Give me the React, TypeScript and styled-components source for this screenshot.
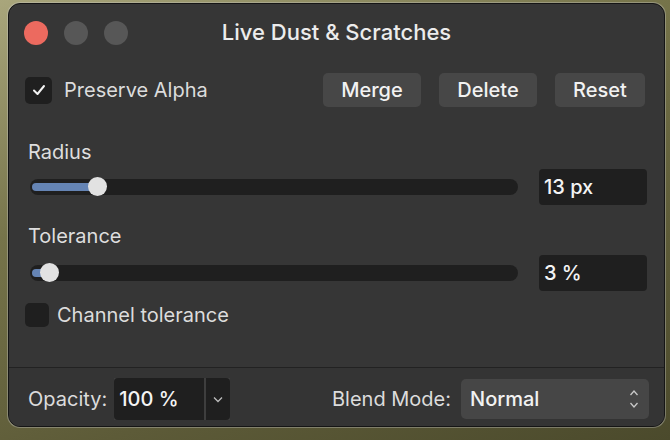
import { createGlobalStyle } from 'styled-components'
import styled from 'styled-components'

const GlobalStyle = createGlobalStyle`
  body {
    margin: 0;
    background: linear-gradient(160deg, #a9a67c 0%, #76744a 35%, #5d5b38 70%, #4b4a2c 100%);
    font-family: Inter, "Open Sans", "Liberation Sans", sans-serif;
    -webkit-font-smoothing: antialiased;
  }
`

const Page = styled.div`
  width: 670px;
  height: 440px;
  padding: 3px 0 0 8px;
  box-sizing: border-box;
`

const Window = styled.div`
  width: 657px;
  height: 424px;
  box-sizing: border-box;
  border-radius: 12px;
  background: #363636;
  border: 1px solid #151515;
  box-shadow: 0 0 0 1px rgba(210, 210, 210, 0.35);
  display: flex;
  flex-direction: column;
  overflow: hidden;
  color: #e2e2e2;
`

const TitleBar = styled.div`
  height: 57px;
  display: grid;
  grid-template-columns: 1fr auto 1fr;
  align-items: center;
  padding: 0 15px;
  flex-shrink: 0;
`

const Lights = styled.div`
  display: flex;
  gap: 16px;
`

const Light = styled.span<{ $color: string }>`
  width: 24px;
  height: 24px;
  border-radius: 50%;
  background: ${(p) => p.$color};
`

const Title = styled.div`
  font-size: 22px;
  font-weight: 500;
  color: #ececec;
  margin-top: -2px;
`

const Content = styled.div`
  flex: 1;
  display: flex;
  flex-direction: column;
  padding: 12px 17px 0 16px;
`

const TopRow = styled.div`
  display: flex;
  align-items: center;
  height: 34px;
`

const CheckRow = styled.label<{ $gap: number; $top?: number }>`
  display: flex;
  align-items: center;
  gap: ${(p) => p.$gap}px;
  margin-top: ${(p) => p.$top ?? 0}px;
  font-size: 20px;
  color: #dcdcdc;
`

const Box = styled.span<{ $size: number }>`
  width: ${(p) => p.$size}px;
  height: ${(p) => p.$size}px;
  border-radius: 5px;
  background: #1f1f1f;
  display: flex;
  align-items: center;
  justify-content: center;
`

const Buttons = styled.div`
  margin-left: auto;
  margin-right: 2px;
  display: flex;
  gap: 18px;
`

const Button = styled.button<{ $w: number }>`
  width: ${(p) => p.$w}px;
  height: 34px;
  border: 0;
  border-radius: 5px;
  background: #474747;
  color: #f2f2f2;
  font-family: inherit;
  font-size: 20px;
  font-weight: 500;
  padding: 0;
`

const Label = styled.div<{ $top: number }>`
  margin: ${(p) => p.$top}px 0 0 3px;
  font-size: 20px;
  line-height: 24px;
  color: #dedede;
`

const SliderRow = styled.div<{ $top: number }>`
  display: flex;
  align-items: center;
  height: 36px;
  margin-top: ${(p) => p.$top}px;
`

const Track = styled.div`
  position: relative;
  margin-left: 5px;
  width: 488px;
  height: 16px;
  border-radius: 8px;
  background: #1f1f1f;
`

const Fill = styled.div`
  position: absolute;
  left: 2px;
  top: 4px;
  height: 8px;
  border-radius: 4px;
  background: #6584b4;
`

const Thumb = styled.div`
  position: absolute;
  top: -2px;
  width: 19px;
  height: 19px;
  margin-left: -10px;
  border-radius: 50%;
  background: #e2e2e2;
`

const ValueBox = styled.div`
  margin-left: 21px;
  width: 108px;
  height: 36px;
  box-sizing: border-box;
  border-radius: 4px;
  background: #1f1f1f;
  color: #f4f4f4;
  font-size: 20px;
  font-weight: 500;
  display: flex;
  align-items: center;
  padding-left: 5px;
`

const Footer = styled.div`
  height: 59px;
  box-sizing: border-box;
  flex-shrink: 0;
  border-top: 1px solid #222;
  background: #343434;
  display: flex;
  align-items: center;
  padding: 4px 15px 0 19px;
  font-size: 20px;
  color: #dcdcdc;
`

const Combo = styled.div`
  margin-left: 7px;
  display: flex;
  gap: 2px;
  height: 42px;
  background: #3e3e3e;
`

const ComboField = styled.div`
  width: 90px;
  background: #1f1f1f;
  border-radius: 4px 0 0 4px;
  color: #f4f4f4;
  font-weight: 500;
  display: flex;
  align-items: center;
  padding-left: 5px;
  box-sizing: border-box;
`

const ComboArrow = styled.div`
  width: 24px;
  background: #1f1f1f;
  border-radius: 0 4px 4px 0;
  display: flex;
  align-items: center;
  justify-content: center;
`

const BlendLabel = styled.span`
  margin-left: auto;
`

const Select = styled.div`
  margin-left: 10px;
  width: 188px;
  height: 40px;
  box-sizing: border-box;
  border-radius: 5px;
  background: #464646;
  color: #f2f2f2;
  font-weight: 500;
  display: flex;
  align-items: center;
  padding: 0 10px 0 9px;
  justify-content: space-between;
`

function Check() {
  return (
    <svg width="14" height="12" viewBox="0 0 14 12">
      <path d="M2 6.5 L5.5 10 L12 2" fill="none" stroke="#f2f2f2" strokeWidth="2" strokeLinecap="round" strokeLinejoin="round" />
    </svg>
  )
}

function Slider({ value }: { value: number }) {
  return (
    <Track>
      <Fill style={{ width: `${value}%` }} />
      <Thumb style={{ left: `${value}%` }} />
    </Track>
  )
}

export default function App() {
  return (
    <>
      <GlobalStyle />
      <Page>
        <Window>
          <TitleBar>
            <Lights>
              <Light $color="#ec6a5f" />
              <Light $color="#575757" />
              <Light $color="#575757" />
            </Lights>
            <Title>Live Dust &amp; Scratches</Title>
            <span />
          </TitleBar>
          <Content>
            <TopRow>
              <CheckRow $gap={12}>
                <Box $size={27}>
                  <Check />
                </Box>
                Preserve Alpha
              </CheckRow>
              <Buttons>
                <Button $w={98}>Merge</Button>
                <Button $w={98}>Delete</Button>
                <Button $w={90}>Reset</Button>
              </Buttons>
            </TopRow>

            <Label $top={33}>Radius</Label>
            <SliderRow $top={5}>
              <Slider value={14} />
              <ValueBox>13 px</ValueBox>
            </SliderRow>

            <Label $top={19}>Tolerance</Label>
            <SliderRow $top={7}>
              <Slider value={4} />
              <ValueBox>3 %</ValueBox>
            </SliderRow>

            <CheckRow $gap={8} $top={12}>
              <Box $size={24} />
              Channel tolerance
            </CheckRow>
          </Content>
          <Footer>
            <span>Opacity:</span>
            <Combo>
              <ComboField>100 %</ComboField>
              <ComboArrow>
                <svg width="10" height="7" viewBox="0 0 10 7">
                  <path d="M1 1.5 L5 5.5 L9 1.5" fill="none" stroke="#bdbdbd" strokeWidth="1.3" />
                </svg>
              </ComboArrow>
            </Combo>
            <BlendLabel>Blend Mode:</BlendLabel>
            <Select>
              Normal
              <svg width="10" height="22" viewBox="0 0 10 22">
                <path d="M1.5 7 L5 3 L8.5 7 M1.5 15 L5 19 L8.5 15" fill="none" stroke="#c8c8c8" strokeWidth="1.3" />
              </svg>
            </Select>
          </Footer>
        </Window>
      </Page>
    </>
  )
}
